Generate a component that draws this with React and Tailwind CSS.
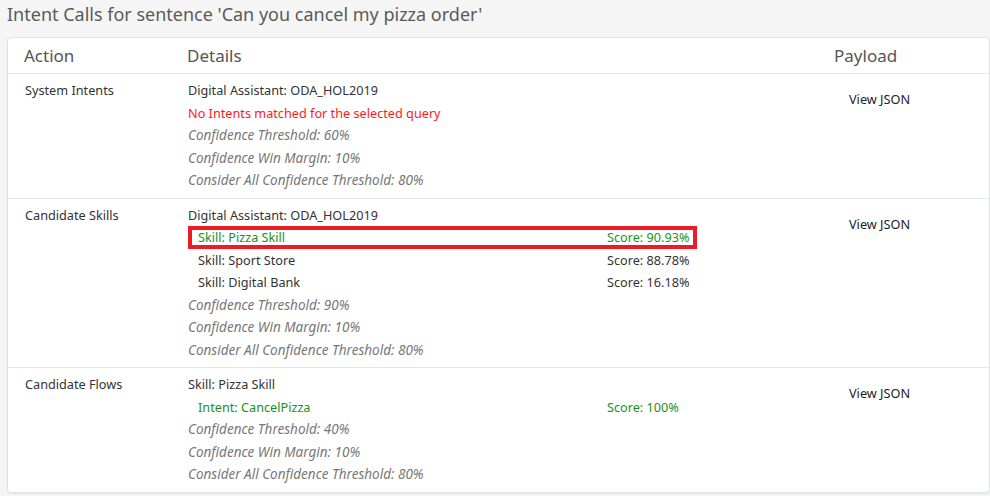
import React from "react";

const rows = [
  {
    action: "System Intents",
    head: "Digital Assistant: ODA_HOL2019",
    error: "No Intents matched for the selected query",
    items: [],
    threshold: "60%",
  },
  {
    action: "Candidate Skills",
    head: "Digital Assistant: ODA_HOL2019",
    items: [
      { name: "Skill: Pizza Skill", score: "Score: 90.93%", match: true, boxed: true },
      { name: "Skill: Sport Store", score: "Score: 88.78%" },
      { name: "Skill: Digital Bank", score: "Score: 16.18%" },
    ],
    threshold: "90%",
  },
  {
    action: "Candidate Flows",
    head: "Skill: Pizza Skill",
    items: [{ name: "Intent: CancelPizza", score: "Score: 100%", match: true }],
    threshold: "40%",
  },
];

function DetailRow({ row, last }) {
  return (
    <div
      className={`grid grid-cols-[163px_647px_1fr] pl-[17px] pt-[5px] pb-[6px] leading-[22.5px] text-[12.7px] ${
        last ? "" : "border-b border-[#e3e7ec]"
      }`}
    >
      <div className="text-[#333]">{row.action}</div>
      <div>
        <div className="text-[#333]">{row.head}</div>
        {row.error && <div className="text-[#ff1a1a]">{row.error}</div>}
        {row.items.map((it) => (
          <div
            key={it.name}
            className={`grid w-[509px] grid-cols-[409px_1fr] whitespace-nowrap pl-[10px] ${
              it.match ? "text-[#1b911b]" : "text-[#333]"
            } ${it.boxed ? "ring-4 ring-inset ring-[#ec1c24]" : ""}`}
          >
            <span>{it.name}</span>
            <span>{it.score}</span>
          </div>
        ))}
        <div className="text-[13.5px] italic text-[#777]">Confidence Threshold: {row.threshold}</div>
        <div className="text-[13.5px] italic text-[#777]">Confidence Win Margin: 10%</div>
        <div className="text-[13.5px] italic text-[#777]">Consider All Confidence Threshold: 80%</div>
      </div>
      <div className="pl-[14px] pt-[9px] text-[#222]">View JSON</div>
    </div>
  );
}

export default function App() {
  return (
    <div
      className="h-[496px] w-[990px] overflow-hidden bg-[#f5f5f5] pl-[7px]"
      style={{ fontFamily: '"Noto Sans", "Open Sans", sans-serif' }}
    >
      <h1 className="h-[37px] pt-[1px] text-[18px] leading-[26px] font-normal text-[#5a5a5a]">
        Intent Calls for sentence 'Can you cancel my pizza order'
      </h1>
      <div className="rounded-[4px] border border-[#dfe3e8] bg-white shadow-[0_1px_2px_rgba(0,0,0,0.06)]">
        <div className="grid h-[36px] grid-cols-[163px_647px_1fr] items-center border-b border-[#e3e7ec] pl-[16px] text-[17px] text-[#555]">
          <div>Action</div>
          <div>Details</div>
          <div>Payload</div>
        </div>
        {rows.map((row, i) => (
          <DetailRow key={row.action} row={row} last={i === rows.length - 1} />
        ))}
      </div>
    </div>
  );
}
